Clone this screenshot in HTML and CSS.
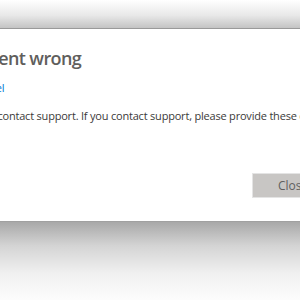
FILE: index.html
```html
<!DOCTYPE html>
<html>
<head>
<meta charset="utf-8">
<link rel="stylesheet" href="styles.css">
</head>
<body>
<div class="shade-top"></div>
<div class="dialog">
  <div class="inner">
    <h1 class="title">Something went wrong</h1>
    <a class="link">Unable to load the model</a>
    <p class="msg">Please try again later or contact support. If you contact support, please provide these details.</p>
    <div class="actions">
      <button class="btn">Close</button>
    </div>
  </div>
</div>
<div class="shade-bottom"></div>
</body>
</html>
```
FILE: styles.css
```css
html, body {
  margin: 0;
  padding: 0;
  width: 300px;
  height: 300px;
  overflow: hidden;
  background: #fff;
  font-family: "Open Sans", "Noto Sans", sans-serif;
}
.shade-top {
  height: 28px;
  background: linear-gradient(#ffffff 0%, #e8e8e8 55%, #c4c4c4 100%);
  border-bottom: 1px solid #9a9a9a;
}
.dialog {
  height: 192px;
  background: #fff;
  overflow: hidden;
}
.inner {
  margin-left: -121px;
  width: 480px;
  white-space: nowrap;
}
.title {
  margin: 0 0 0 13px;
  padding-top: 17px;
  font-size: 18px;
  font-weight: 600;
  letter-spacing: -0.6px;
  line-height: 24px;
  color: #605e5c;
}
.link {
  display: block;
  margin-top: 10px;
  font-size: 11px;
  letter-spacing: -0.2px;
  line-height: 15px;
  color: #0078d4;
}
.msg {
  margin: 13px 0 0;
  font-size: 11px;
  letter-spacing: -0.2px;
  line-height: 15px;
  color: #3b3a39;
}
.actions {
  display: flex;
  margin-top: 50px;
  padding-left: 373px;
}
.btn {
  height: 25px;
  width: 90px;
  border: 1px solid #e4e4e4;
  background: #c8c6c4;
  color: #5f5f5f;
  font-family: inherit;
  font-size: 12px;
  text-align: left;
  padding: 0 0 0 25px;
}
.shade-bottom {
  height: 79px;
  border-top: 1px solid #a0a0a0;
  background: linear-gradient(#a8a8a8 0%, #d4d4d4 30%, #f0f0f0 65%, #fdfdfd 100%);
}
```
